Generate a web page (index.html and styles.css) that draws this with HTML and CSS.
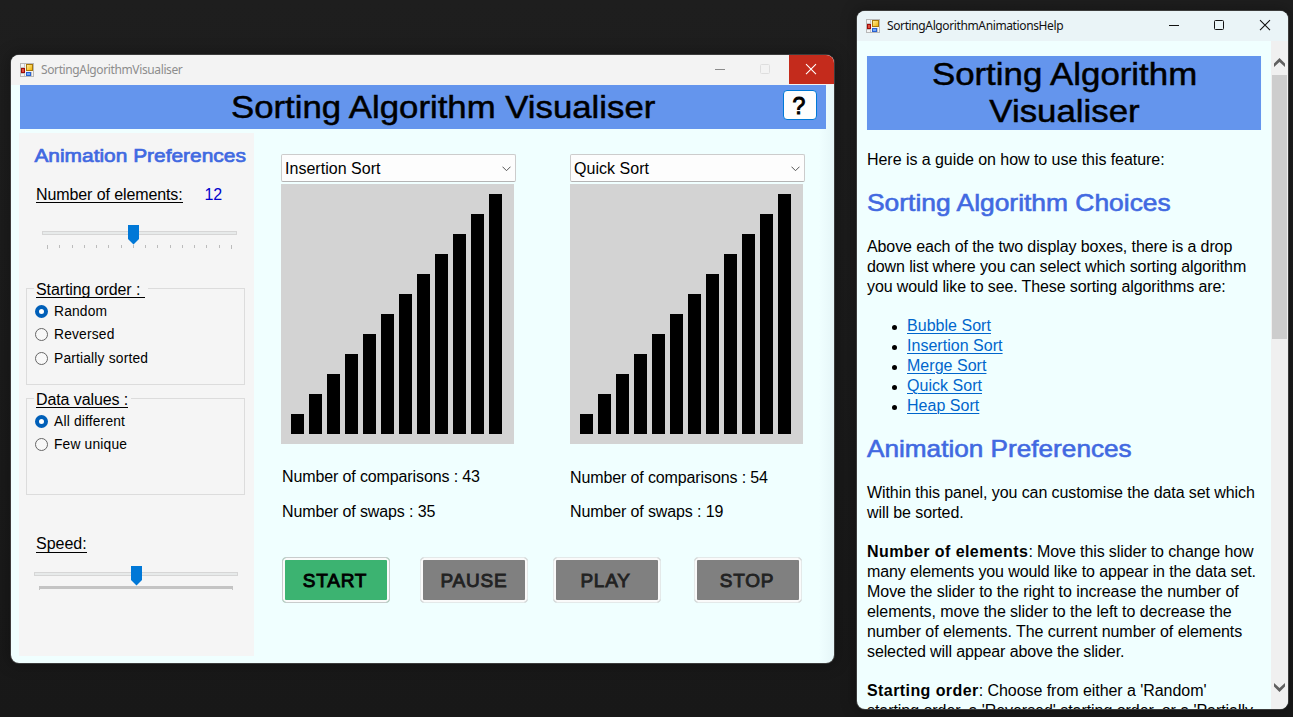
FILE: index.html
```html
<!DOCTYPE html>
<html lang="en">
<head>
<meta charset="utf-8">
<title>SortingAlgorithmVisualiser</title>
<link rel="stylesheet" href="styles.css">
</head>
<body>
<svg width="0" height="0" class="defs">
  <defs>
    <linearGradient id="gold" x1="0" y1="0" x2="1" y2="1"><stop offset="0" stop-color="#fff0a0"/><stop offset="1" stop-color="#f0b000"/></linearGradient>
    <symbol id="app" viewBox="0 0 14 14">
      <rect x=".5" y=".5" width="13" height="13" fill="#f4f4f4" stroke="#b8b8b8"/>
      <path d="M4.500 1v12M1 4.500h4M1 10.500h4M11.500 9v4" stroke="#c4c4c4" fill="none"/>
      <rect x="6.500" y="1.500" width="6" height="6" fill="url(#gold)" stroke="#a8780c"/>
      <rect x="1.500" y="5.500" width="3" height="4" fill="#e05040" stroke="#a00c08"/>
      <rect x="6.500" y="9.500" width="4" height="3" fill="#70a8f8" stroke="#2860d0"/>
    </symbol>
  </defs>
</svg>
<main class="desktop">
  <section class="window visualiser">
    <header class="titlebar">
      <svg class="app-icon"><use href="#app"/></svg>
      <span class="caption caption-main">SortingAlgorithmVisualiser</span>
      <div class="controls">
        <svg class="control" viewBox="0 0 45 29"><path d="M16 14.500h10" stroke="#8c8c8c"/></svg>
        <svg class="control" viewBox="0 0 45 29"><rect x="16.500" y="9.500" width="9" height="9" rx="1" fill="none" stroke="#dedede"/></svg>
        <svg class="control close" viewBox="0 0 45 29"><path d="M17 9.200l10 10M27 9.200l-10 10" stroke="#fff" stroke-width="1.100"/></svg>
      </div>
    </header>
    <div class="banner">
      <h1 class="banner-title">Sorting Algorithm Visualiser</h1>
      <button class="help">?</button>
    </div>
    <div class="workspace">
      <aside class="preferences">
        <h2 class="pref-title">Animation Preferences</h2>
        <div class="elements-row"><span class="under elements-label">Number of elements:</span><span class="count">12</span></div>
        <svg class="slider slider-count" viewBox="0 0 195 24">
          <rect x=".5" y="6.500" width="194" height="3" fill="#e7eaea" stroke="#d6d6d6"/>
          <path d="M5.500 20v4M189.500 20v4M17.500 20v3M30.500 20v3M42.500 20v3M54.500 20v3M66.500 20v3M79.500 20v3M91.500 20v3M103.500 20v3M115.500 20v3M128.500 20v3M140.500 20v3M152.500 20v3M164.500 20v3M177.500 20v3" stroke="#bcbcbc"/>
          <path d="M86 0h11v14l-5.500 5.500L86 14z" fill="#0078d7"/>
        </svg>
        <fieldset class="group group-order">
          <legend class="legend"><span class="under">Starting order :&nbsp;</span></legend>
          <label class="option"><i class="radio checked"></i><span>Random</span></label>
          <label class="option"><i class="radio"></i><span>Reversed</span></label>
          <label class="option last"><i class="radio"></i><span>Partially sorted</span></label>
        </fieldset>
        <fieldset class="group group-values">
          <legend class="legend"><span class="under">Data values :</span></legend>
          <label class="option"><i class="radio checked"></i><span>All different</span></label>
          <label class="option"><i class="radio"></i><span>Few unique</span></label>
        </fieldset>
        <div class="speed-label"><span class="under speed-text">Speed:</span></div>
        <svg class="slider slider-speed" viewBox="0 0 204 24">
          <rect x=".5" y="6.500" width="203" height="3" fill="#e7eaea" stroke="#d6d6d6"/>
          <path d="M5 20h194v4h-1v-1H6v1H5z" fill="#c4c4c4"/>
          <path d="M97 0h11v14l-5.500 5.500L97 14z" fill="#0078d7"/>
        </svg>
      </aside>
      <div class="stage">
        <div class="panels">
          <section class="panel">
            <div class="select"><span>Insertion Sort</span><svg class="arrow" viewBox="0 0 9 6"><path d="M.5.700l4 4 4-4" fill="none" stroke="#555"/></svg></div>
            <div class="bars"><i class="bar" style="height:20px"></i><i class="bar" style="height:40px"></i><i class="bar" style="height:60px"></i><i class="bar" style="height:80px"></i><i class="bar" style="height:100px"></i><i class="bar" style="height:120px"></i><i class="bar" style="height:140px"></i><i class="bar" style="height:160px"></i><i class="bar" style="height:180px"></i><i class="bar" style="height:200px"></i><i class="bar" style="height:220px"></i><i class="bar" style="height:240px"></i></div>
            <p class="stat stat-left">Number of comparisons : 43</p>
            <p class="stat stat-left swaps">Number of swaps : 35</p>
          </section>
          <section class="panel">
            <div class="select"><span>Quick Sort</span><svg class="arrow" viewBox="0 0 9 6"><path d="M.5.700l4 4 4-4" fill="none" stroke="#555"/></svg></div>
            <div class="bars"><i class="bar" style="height:20px"></i><i class="bar" style="height:40px"></i><i class="bar" style="height:60px"></i><i class="bar" style="height:80px"></i><i class="bar" style="height:100px"></i><i class="bar" style="height:120px"></i><i class="bar" style="height:140px"></i><i class="bar" style="height:160px"></i><i class="bar" style="height:180px"></i><i class="bar" style="height:200px"></i><i class="bar" style="height:220px"></i><i class="bar" style="height:240px"></i></div>
            <p class="stat stat-low">Number of comparisons : 54</p>
            <p class="stat swaps swaps-low">Number of swaps : 19</p>
          </section>
        </div>
        <div class="actions">
          <button class="action start">START</button>
          <button class="action pause">PAUSE</button>
          <button class="action play">PLAY</button>
          <button class="action stop">STOP</button>
        </div>
      </div>
    </div>
  </section>

  <section class="window guide">
    <header class="titlebar guide-bar">
      <svg class="app-icon"><use href="#app"/></svg>
      <span class="caption caption-help">SortingAlgorithmAnimationsHelp</span>
      <div class="controls guide-controls">
        <svg class="control" viewBox="0 0 45 29"><path d="M16 14.500h10" stroke="#111"/></svg>
        <svg class="control" viewBox="0 0 45 29"><rect x="16.500" y="9.500" width="9" height="9" rx="1" fill="none" stroke="#111"/></svg>
        <svg class="control" viewBox="0 0 45 29"><path d="M17 9.200l10 10M27 9.200l-10 10" stroke="#111" stroke-width="1.100"/></svg>
      </div>
    </header>
    <div class="guide-body">
      <article class="doc">
        <h1 class="doc-title">Sorting Algorithm<br>Visualiser</h1>
        <p class="intro">Here is a guide on how to use this feature:</p>
        <h2 class="doc-heading">Sorting Algorithm Choices</h2>
        <p>Above each of the two display boxes, there is a drop<br>down list where you can select which sorting algorithm<br>you would like to see. These sorting algorithms are:</p>
        <ul class="links">
          <li><a>Bubble Sort</a></li>
          <li><a>Insertion Sort</a></li>
          <li><a>Merge Sort</a></li>
          <li><a>Quick Sort</a></li>
          <li><a>Heap Sort</a></li>
        </ul>
        <h2 class="doc-heading second">Animation Preferences</h2>
        <p class="within">Within this panel, you can customise the data set which<br>will be sorted.</p>
        <p><b>Number of elements</b>: Move this slider to change how<br>many elements you would like to appear in the data set.<br><span class="loose">Move the slider to the right to increase the number of<br>elements, move the slider to the left to decrease the<br>number of elements. The current number of elements</span><br>selected will appear above the slider.</p>
        <p class="loose"><b>Starting order</b>: Choose from either a 'Random'<br>starting order, a 'Reversed' starting order, or a 'Partially</p>
      </article>
      <div class="scrollbar">
        <svg class="scroll-arrow" viewBox="0 0 11 9"><path d="M0 5.500L5.500 0 11 5.500v3.500L5.500 4 0 9z" fill="#606060"/></svg>
        <i class="scroll-thumb"></i>
        <svg class="scroll-arrow down" viewBox="0 0 11 9"><path d="M0 3.500l5.500 5.500L11 3.500V0L5.500 5 0 0z" fill="#606060"/></svg>
      </div>
    </div>
  </section>
</main>
</body>
</html>
```
FILE: styles.css
```css
* { box-sizing: border-box; }
body { margin: 0; background: #1b1b1b; font: 16px/20px "Liberation Sans", Arial, sans-serif; color: #000; }
h1, h2, p, ul { margin: 0; padding: 0; }
svg { display: block; }
.defs { position: absolute; }
.desktop { position: relative; width: 1293px; height: 717px; overflow: hidden; background: linear-gradient(#1e1e1e, #181818); }

.window { position: absolute; background: #f0ffff; border-radius: 8px; overflow: hidden; box-shadow: 0 0 0 1px #3c3c3c, 0 0 14px 3px rgba(0,0,0,.25); display: flex; flex-direction: column; }
.visualiser { left: 11px; top: 55px; width: 823px; height: 608px; background: linear-gradient(90deg, #f0ffff 808px, #e6f6f8); }
.guide { left: 857px; top: 11px; width: 431px; height: 698px; }
.titlebar { display: flex; align-items: center; height: 30px; flex: none; padding-left: 9px; background: #f3f3f3; }
.guide-bar { background: #eaf4f7; }
.app-icon { width: 14px; height: 14px; margin-right: 7px; }
.caption { font: 12px/16px "Noto Sans", sans-serif; white-space: nowrap; letter-spacing: -.38px; }
.caption-main { color: #8d8d8d; }
.caption-help { color: #111; }
.controls { display: flex; align-self: flex-start; margin-left: auto; }
.control { width: 45px; height: 29px; }
.close { background: #c42b1c; }

.banner { display: flex; align-items: center; flex: none; width: 806px; height: 44px; margin-left: 9px; background: #6495ed; }
.banner-title { margin-left: 211px; font-size: 32px; line-height: 44px; font-weight: 400; transform: scaleX(1.086); transform-origin: left; -webkit-text-stroke: .5px #000; white-space: nowrap; }
.help { width: 34px; height: 30px; margin: 0 9px 4px auto; padding: 2px 2px 0 0; background: #fdfdfd; border: 1px solid #0078d7; border-radius: 4px; font: 23px/26px "Liberation Sans", sans-serif; color: #000; -webkit-text-stroke: 1px #000; }

.workspace { display: flex; padding: 4px 0 0 8px; }
.preferences { width: 235px; height: 523px; flex: none; background: #f5f5f5; }
.pref-title { padding: 12px 0 0 14px; font-size: 19px; line-height: 22px; font-weight: 400; color: #4169e1; transform: scaleX(1.1); transform-origin: left; -webkit-text-stroke: .7px #4169e1; white-space: nowrap; }
.under { border-bottom: 1px solid #000; display: inline-block; height: 18px; line-height: 19px; white-space: pre; letter-spacing: -.1px; }
.elements-row { display: flex; height: 20px; margin: 18px 0 0 17px; }
.count { margin-left: 22px; line-height: 19px; color: #0000cd; letter-spacing: -.2px; }
.slider { height: 24px; }
.slider-count { width: 195px; margin: 20px 0 0 23px; }
.slider-speed { width: 204px; margin: 12px 0 0 15px; }
.group { width: 219px; margin: 0 0 0 7px; padding: 2px 0 0 8px; border: 1px solid #dcdcdc; min-width: 0; }
.group-order { height: 105px; margin-top: 31px; }
.group-values { height: 105px; margin-top: 5px; }
.legend { padding: 0 3px 0 2px; margin-left: -1px; height: 16px; line-height: 17px; }
.option { position: relative; top: 2px; display: flex; align-items: center; height: 23px; font-size: 13.8px; line-height: 18px; letter-spacing: .18px; }
.option.last { margin-top: 1px; }
.option span { margin-left: 6px; }
.radio { width: 13px; height: 13px; border: 1px solid #666; border-radius: 50%; background: #f8f8f8; }
.radio.checked { border: 4px solid #005fb8; background: #fff; }
.speed-label { margin: 39px 0 0 17px; height: 20px; }
.speed-text { letter-spacing: 0; line-height: 18px; }

.stage { margin-left: 27px; padding-top: 21px; }
.panels { display: flex; gap: 54px; }
.panel { width: 235px; }
.select { display: flex; align-items: center; justify-content: space-between; height: 28px; padding: 0 4px 0 3px; background: #fdfdfd; border: 1px solid #ccc; border-bottom-color: #b4b4b4; border-radius: 2px; letter-spacing: .03px; }
.select span { padding-top: 2px; }
.arrow { width: 9px; height: 6px; margin-top: 2px; }
.bars { display: flex; align-items: flex-end; gap: 5px; width: 233px; height: 260px; margin-top: 2px; padding: 0 10px 10px; background: #d3d3d3; }
.bar { width: 13px; background: #000; }
.stat { margin-top: 23px; letter-spacing: -.12px; white-space: nowrap; }
.stat-left { padding-left: 1px; }
.stat-low { margin-top: 24px; }
.stat.swaps { margin-top: 15px; }
.stat.swaps-low { margin-top: 14px; }
.actions { display: flex; margin: 35px 0 0 1px; }
.action { width: 108px; height: 46px; padding: 1px 2px 0 0; border: 1px solid #e4e9e9; border-radius: 4px; background: #808080; box-shadow: inset 0 0 0 2px #fafafa; color: #222; font: 19px/38px "Liberation Sans", sans-serif; letter-spacing: .75px; -webkit-text-stroke: .9px; }
.start { background: #3cb371; border-color: #c8cccc; color: #000; }
.pause { margin-left: 30px; padding-right: 0; }
.play { margin-left: 25px; padding-right: 3px; }
.stop { margin-left: 33px; }

.guide-body { display: flex; flex: 1; min-height: 0; }
.doc { width: 414px; padding: 15px 10px 0; overflow: hidden; white-space: nowrap; letter-spacing: -.11px; }
.doc-title { height: 74px; background: #6495ed; transform: scaleX(1.0885); width: 362px; margin-left: 16px; padding-left: 1px; letter-spacing: 0; font-size: 32px; line-height: 37px; font-weight: 400; text-align: center; -webkit-text-stroke: .5px #000; }
.doc p { margin-bottom: 19px; }
.doc .intro { margin: 20px 0 0; letter-spacing: -.05px; }
.within { letter-spacing: -.08px; }
.loose { letter-spacing: -.05px; }
.doc b { letter-spacing: .42px; }
.doc-heading { margin: 19px 0 21px; font-size: 24px; line-height: 27px; font-weight: 400; color: #4169e1; letter-spacing: 0; transform: scaleX(1.1); transform-origin: left; -webkit-text-stroke: .6px #4169e1; }
.doc-heading.second { margin: 19px 0 21px; transform: scaleX(1.09); }
.links { list-style: none; padding-left: 25px; letter-spacing: .03px; }
.links li { display: flex; height: 20px; }
.links li::before { content: ""; width: 5px; height: 5px; margin: 9px 10px 0 0; border-radius: 50%; background: #000; }
.links a { color: #06c; text-decoration: underline; text-underline-offset: 2px; text-decoration-thickness: 1px; }
.scrollbar { display: flex; flex-direction: column; align-items: center; width: 17px; padding: 17px 0 17px; background: #f0f0f0; }
.scroll-arrow { width: 11px; height: 9px; flex: none; }
.scroll-thumb { width: 15px; height: 264px; margin-top: 8px; background: #cdcdcd; }
.scroll-arrow.down { margin-top: auto; }
```
